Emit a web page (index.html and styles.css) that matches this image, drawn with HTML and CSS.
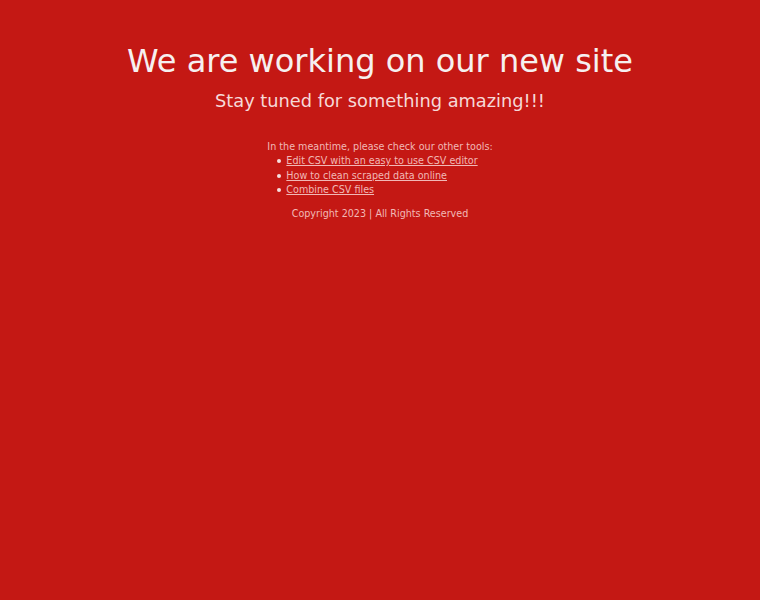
FILE: index.html
```html
<!DOCTYPE html>
<html>
<head>
<meta charset="utf-8">
<link rel="stylesheet" href="styles.css">
</head>
<body>
<main class="page">
  <h1 class="title">We are working on our new site</h1>
  <p class="subtitle">Stay tuned for something amazing!!!</p>
  <div class="tools">
    <p class="intro">In the meantime, please check our other tools:</p>
    <ul class="links">
      <li><a href="#">Edit CSV with an easy to use CSV editor</a></li>
      <li><a href="#">How to clean scraped data online</a></li>
      <li><a href="#">Combine CSV files</a></li>
    </ul>
  </div>
  <p class="copyright">Copyright 2023 | All Rights Reserved</p>
</main>
</body>
</html>
```
FILE: styles.css
```css
html, body {
  margin: 0;
  padding: 0;
  background: #c41814;
  height: 100%;
}
body {
  font-family: "DejaVu Sans", sans-serif;
  color: #f3f3f3;
}
.page {
  text-align: center;
  padding-top: 41px;
}
.title {
  margin: 0;
  font-size: 32px;
  font-weight: normal;
  line-height: 40px;
  color: #f6f0f0;
}
.subtitle {
  margin: 0;
  font-size: 17.8px;
  line-height: 24px;
  padding-top: 8px;
  color: #f6d9d8;
}
.tools {
  display: inline-block;
  text-align: left;
  margin-top: 27px;
  font-size: 9.6px;
  line-height: 14.4px;
  color: #f1b8b6;
}
.intro {
  margin: 0;
}
.links {
  margin: 0;
  padding-left: 19px;
  list-style: none;
}
.links li::before {
  content: "";
  display: inline-block;
  width: 4px;
  height: 4px;
  border-radius: 50%;
  background: #f6e0df;
  margin-left: -9px;
  margin-right: 5px;
  vertical-align: 1px;
}
.links a {
  color: #f1b8b6;
}
.copyright {
  margin: 9px 0 0;
  font-size: 9.6px;
  line-height: 14px;
  color: #f1b8b6;
}
```
